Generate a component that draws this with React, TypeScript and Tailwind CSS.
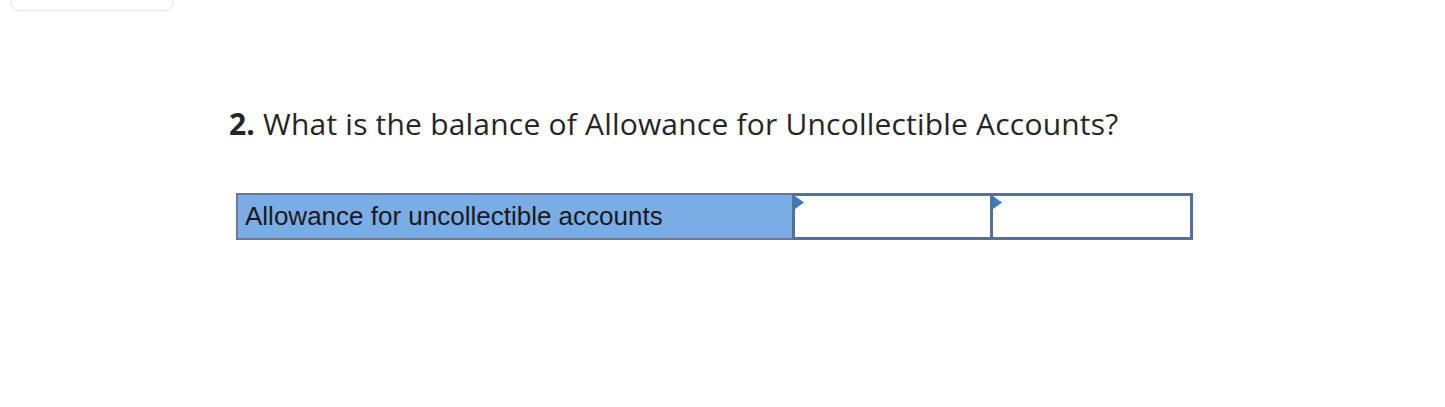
import React from "react";

function Triangle() {
  return (
    <svg className="absolute left-0 top-0" width="9" height="13" viewBox="0 0 9 13">
      <polygon points="0,0 9,6.5 0,13" fill="#3b7bc6" />
    </svg>
  );
}

export default function App() {
  return (
    <div className="w-[1445px] h-[407px] bg-white relative overflow-hidden">
      <div className="absolute left-[10px] top-[-20px] w-[164px] h-[31px] rounded-[9px] border border-[#e3e3e3] bg-white" />
      <div className="pt-[104px] pl-[229px]">
        <p
          className="text-[30px] leading-[40px] tracking-[0.2px] text-[#262626]"
          style={{ fontFamily: '"Open Sans", sans-serif' }}
        >
          <span className="font-bold">2.</span> What is the balance of Allowance for Uncollectible Accounts?
        </p>
      </div>
      <div className="pl-[236px] pt-[49px]">
        <div className="flex w-[957px] h-[47px]">
          <div
            className="w-[556px] h-full bg-[#7aace6] border-[2px] border-r-0 border-[#6d7888] flex items-center pl-[7px] text-[26px] text-[#1a1a1a]"
            style={{ fontFamily: '"Liberation Sans", Arial, sans-serif' }}
          >
            Allowance for uncollectible accounts
          </div>
          <div className="relative w-[201px] h-full bg-white border-[3px] border-[#56709a]">
            <Triangle />
          </div>
          <div className="relative w-[200px] h-full bg-white border-[3px] border-l-0 border-[#56709a]">
            <Triangle />
          </div>
        </div>
      </div>
    </div>
  );
}
